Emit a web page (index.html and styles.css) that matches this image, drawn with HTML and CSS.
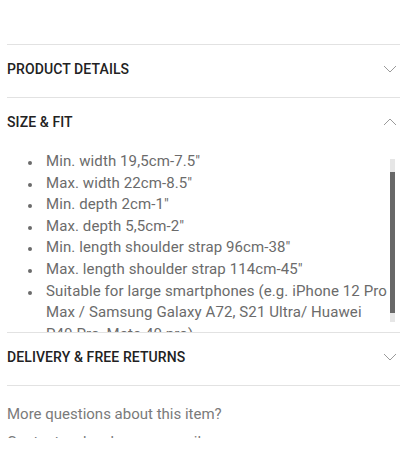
FILE: index.html
```html
<!DOCTYPE html>
<html>
  <head>
    <title>Size &amp; fit</title>
    <meta charset="UTF-8">
    <meta name="viewport" content="width=device-width,initial-scale=1">
    <link rel="stylesheet" href="styles.css">
  </head>
  <body>
    <div class="page">
      <div class="accordion">
        <div class="section">
          <div class="section_head">
            <span class="section_title">PRODUCT DETAILS</span>
            <svg class="chevron" width="14" height="8" viewBox="0 0 14 8"><path d="M1 1 L7 7 L13 1" fill="none" stroke="#9a9a9a" stroke-width="1"/></svg>
          </div>
        </div>
        <div class="section">
          <div class="section_head">
            <span class="section_title">SIZE &amp; FIT</span>
            <svg class="chevron" width="14" height="8" viewBox="0 0 14 8"><path d="M1 7 L7 1 L13 7" fill="none" stroke="#9a9a9a" stroke-width="1"/></svg>
          </div>
          <div class="section_body">
            <div class="scroll_area">
              <ul class="size_list">
                <li>Min. width 19,5cm-7.5"</li>
                <li>Max. width 22cm-8.5"</li>
                <li>Min. depth 2cm-1"</li>
                <li>Max. depth 5,5cm-2"</li>
                <li>Min. length shoulder strap 96cm-38"</li>
                <li>Max. length shoulder strap 114cm-45"</li>
                <li>Suitable for large smartphones (e.g. iPhone 12 Pro Max / Samsung Galaxy A72, S21 Ultra/ Huawei P40 Pro, Mate 40 pro)</li>
              </ul>
            </div>
            <div class="scroll_track"><div class="scroll_thumb"></div></div>
          </div>
        </div>
        <div class="section">
          <div class="section_head">
            <span class="section_title">DELIVERY &amp; FREE RETURNS</span>
            <svg class="chevron" width="14" height="8" viewBox="0 0 14 8"><path d="M1 1 L7 7 L13 1" fill="none" stroke="#9a9a9a" stroke-width="1"/></svg>
          </div>
        </div>
        <div class="section">
          <div class="questions">
            <p class="q_title">More questions about this item?</p>
            <p class="q_text">Contact us by phone or email</p>
          </div>
        </div>
      </div>
    </div>
  </body>
</html>
```
FILE: styles.css
```css
body
{
  margin: 0;
  padding: 0;
  background: #ffffff;
  font-family: Roboto, "Liberation Sans", Arial, sans-serif;
}
.page
{
  height: 438px;
  overflow: hidden;
  padding-top: 44px;
  box-sizing: border-box;
}
.accordion
{
  margin-left: 7px;
}
.section
{
  border-top: 1px solid #e2e2e2;
}
.section_head
{
  display: flex;
  justify-content: space-between;
  align-items: center;
  height: 52px;
  padding: 0 3px 4px 0;
  box-sizing: border-box;
}
.section_title
{
  font-size: 14px;
  font-weight: 500;
  letter-spacing: 0.1px;
  color: #222222;
}
.chevron
{
  display: block;
}
.section_body
{
  position: relative;
  height: 182px;
}
.scroll_area
{
  height: 100%;
  overflow: hidden;
}
/* fake scrollbar, native one is hidden in headless */
.scroll_track
{
  position: absolute;
  right: 5px;
  top: 9px;
  bottom: 10px;
  width: 5px;
  background: #e6e6e6;
}
.scroll_thumb
{
  position: absolute;
  left: 0;
  right: 0;
  top: 13px;
  bottom: 9px;
  background: #686868;
}
.size_list
{
  margin: 0;
  padding: 1px 10px 0 39px;
  list-style: none;
  font-size: 15px;
  line-height: 21.6px;
  letter-spacing: 0.1px;
  color: #6b6b6b;
}
.size_list li
{
  position: relative;
}
.size_list li::before
{
  content: "";
  position: absolute;
  left: -18px;
  top: 10px;
  width: 4px;
  height: 4px;
  border-radius: 50%;
  background: #6b6b6b;
}
.size_list li:last-child
{
  padding-bottom: 4px;
}
.questions
{
  padding-top: 18px;
}
.q_title
{
  margin: 0;
  font-size: 15px;
  letter-spacing: 0;
  line-height: 20px;
  color: #7a7a7a;
}
.q_text
{
  margin: 8px 0 0 0;
  font-size: 15px;
  letter-spacing: 0;
  line-height: 20px;
  color: #7a7a7a;
}
```
